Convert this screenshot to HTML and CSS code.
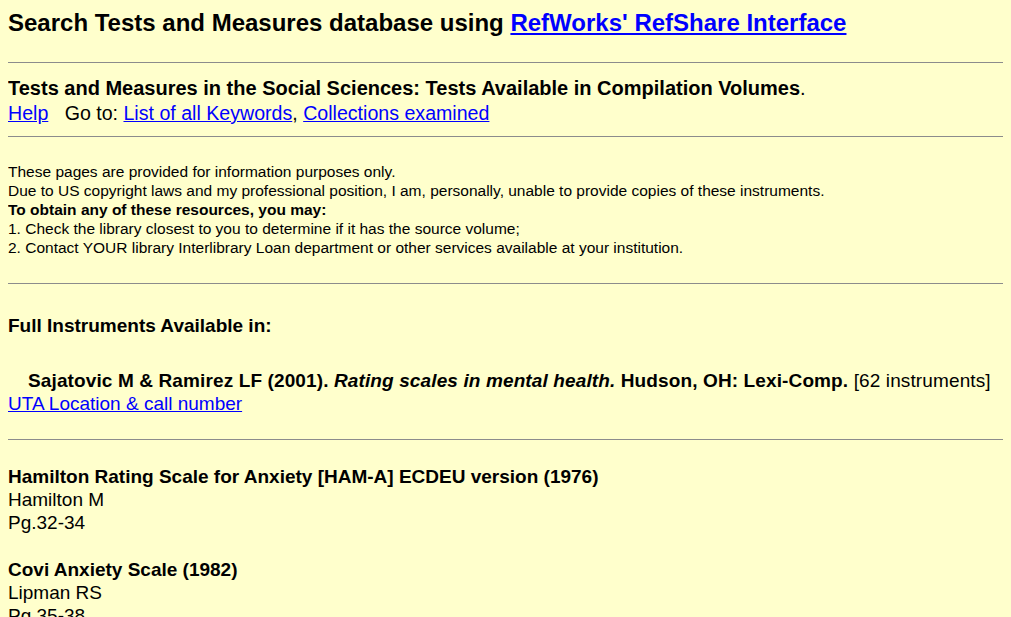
FILE: index.html
```html
<!DOCTYPE html>
<html>
<head>
<meta charset="utf-8">
<link rel="stylesheet" href="styles.css">
</head>
<body>
<h1 class="title">Search Tests and Measures database using <a href="#">RefWorks' RefShare Interface</a></h1>
<hr class="rule rule-title">
<div class="intro">
  <div class="subtitle"><b>Tests and Measures in the Social Sciences: Tests Available in Compilation Volumes</b>.</div>
  <div class="nav"><a href="#">Help</a>&nbsp;&nbsp; Go to: <a href="#">List of all Keywords</a>, <a href="#">Collections examined</a></div>
</div>
<hr class="rule">
<div class="notice">
  <div>These pages are provided for information purposes only.</div>
  <div>Due to US copyright laws and my professional position, I am, personally, unable to provide copies of these instruments.</div>
  <div><b>To obtain any of these resources, you may:</b></div>
  <div>1. Check the library closest to you to determine if it has the source volume;</div>
  <div>2. Contact YOUR library Interlibrary Loan department or other services available at your institution.</div>
</div>
<hr class="rule">
<div class="source">
  <div class="source-head"><b>Full Instruments Available in:</b></div>
  <div class="citation"><b>Sajatovic M &amp; Ramirez LF (2001). <i>Rating scales in mental health.</i> Hudson, OH: Lexi-Comp.</b> [62 instruments]</div>
  <div><a href="#">UTA Location &amp; call number</a></div>
</div>
<hr class="rule">
<div class="list">
  <div class="item">
    <div><b>Hamilton Rating Scale for Anxiety [HAM-A] ECDEU version (1976)</b></div>
    <div>Hamilton M</div>
    <div>Pg.32-34</div>
  </div>
  <div class="item">
    <div><b>Covi Anxiety Scale (1982)</b></div>
    <div>Lipman RS</div>
    <div>Pg.35-38</div>
  </div>
</div>
</body>
</html>
```
FILE: styles.css
```css
html, body {
  background: #ffffcc;
}
body {
  margin: 8px;
  font-family: "Liberation Sans", Arial, sans-serif;
  font-size: 19px;
  line-height: 23px;
  color: #000;
}
a {
  color: #0000ff;
  text-decoration: underline;
}
.title {
  font-size: 24px;
  font-weight: bold;
  line-height: 30px;
  margin: 0;
}
.rule {
  border: 0;
  border-top: 1px solid #8c8c8c;
  height: 0;
  margin: 0;
}
.rule-title {
  margin-top: 24px;
}
.intro {
  line-height: 25px;
  padding: 13px 0 10px 0;
}
.subtitle {
  font-size: 20px;
}
.nav {
  font-size: 19.6px;
}
.notice {
  font-size: 15.5px;
  line-height: 19px;
  padding: 25px 0 26px 0;
}
.source {
  padding: 30px 0 24px 0;
}
.source-head {
  margin-bottom: 32px;
}
.citation {
  padding-left: 20px;
  letter-spacing: 0.12px;
}
.list {
  padding-top: 25px;
}
.item {
  margin-bottom: 24px;
}
```
